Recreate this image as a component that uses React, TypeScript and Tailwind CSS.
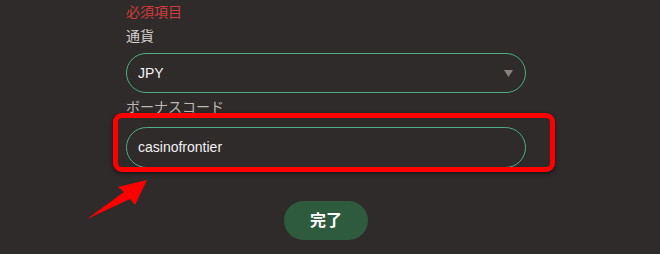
export default function App() {
  return (
    <div
      className="relative w-[660px] h-[254px] overflow-hidden bg-[#2f2b2a]"
      style={{ fontFamily: '"Liberation Sans", "Noto Sans CJK JP", sans-serif' }}
    >
      <div className="pl-[126px] w-[526px] pt-[2px]">
        <p className="text-[14px] leading-5 text-[#d13b3b]">必須項目</p>
        <p className="mt-[4px] text-[14px] leading-5 text-[#d4d0cc]">通貨</p>
        <div className="mt-[7px] h-[40px] rounded-full border border-[#4fae84] flex items-center justify-between pl-[11px] pr-[12px]">
          <span className="text-[14px] text-[#f2f2f2]">JPY</span>
          <svg width="9" height="7" viewBox="0 0 9 7">
            <path d="M0 0 L9 0 L4.5 7 Z" fill="#8a817c" />
          </svg>
        </div>
        <p className="mt-[4px] text-[14px] leading-5 text-[#bdb8b4]">ボーナスコード</p>
        <div className="mt-[10px] h-[41px] rounded-full border border-[#4fae84] flex items-center pl-[11px]">
          <span className="text-[14px] text-[#f2f2f2]">casinofrontier</span>
        </div>
        <div className="mt-[33px] flex justify-center">
          <button className="w-[84px] h-[39px] rounded-full bg-[#2e5b3e] text-white text-[16px] font-bold">
            完了
          </button>
        </div>
      </div>

      <div className="absolute left-[113px] top-[113px] w-[442px] h-[59px] rounded-[9px] border-[5px] border-[#ff0000] shadow-[0_2px_4px_rgba(0,0,0,0.5)]" />

      <svg className="absolute left-0 top-0" width="660" height="254" viewBox="0 0 660 254">
        <path d="M87 219 L124 192 L118 187 L147 180 L135 205 L130 199 Z" fill="#ff0000" />
      </svg>
    </div>
  )
}
